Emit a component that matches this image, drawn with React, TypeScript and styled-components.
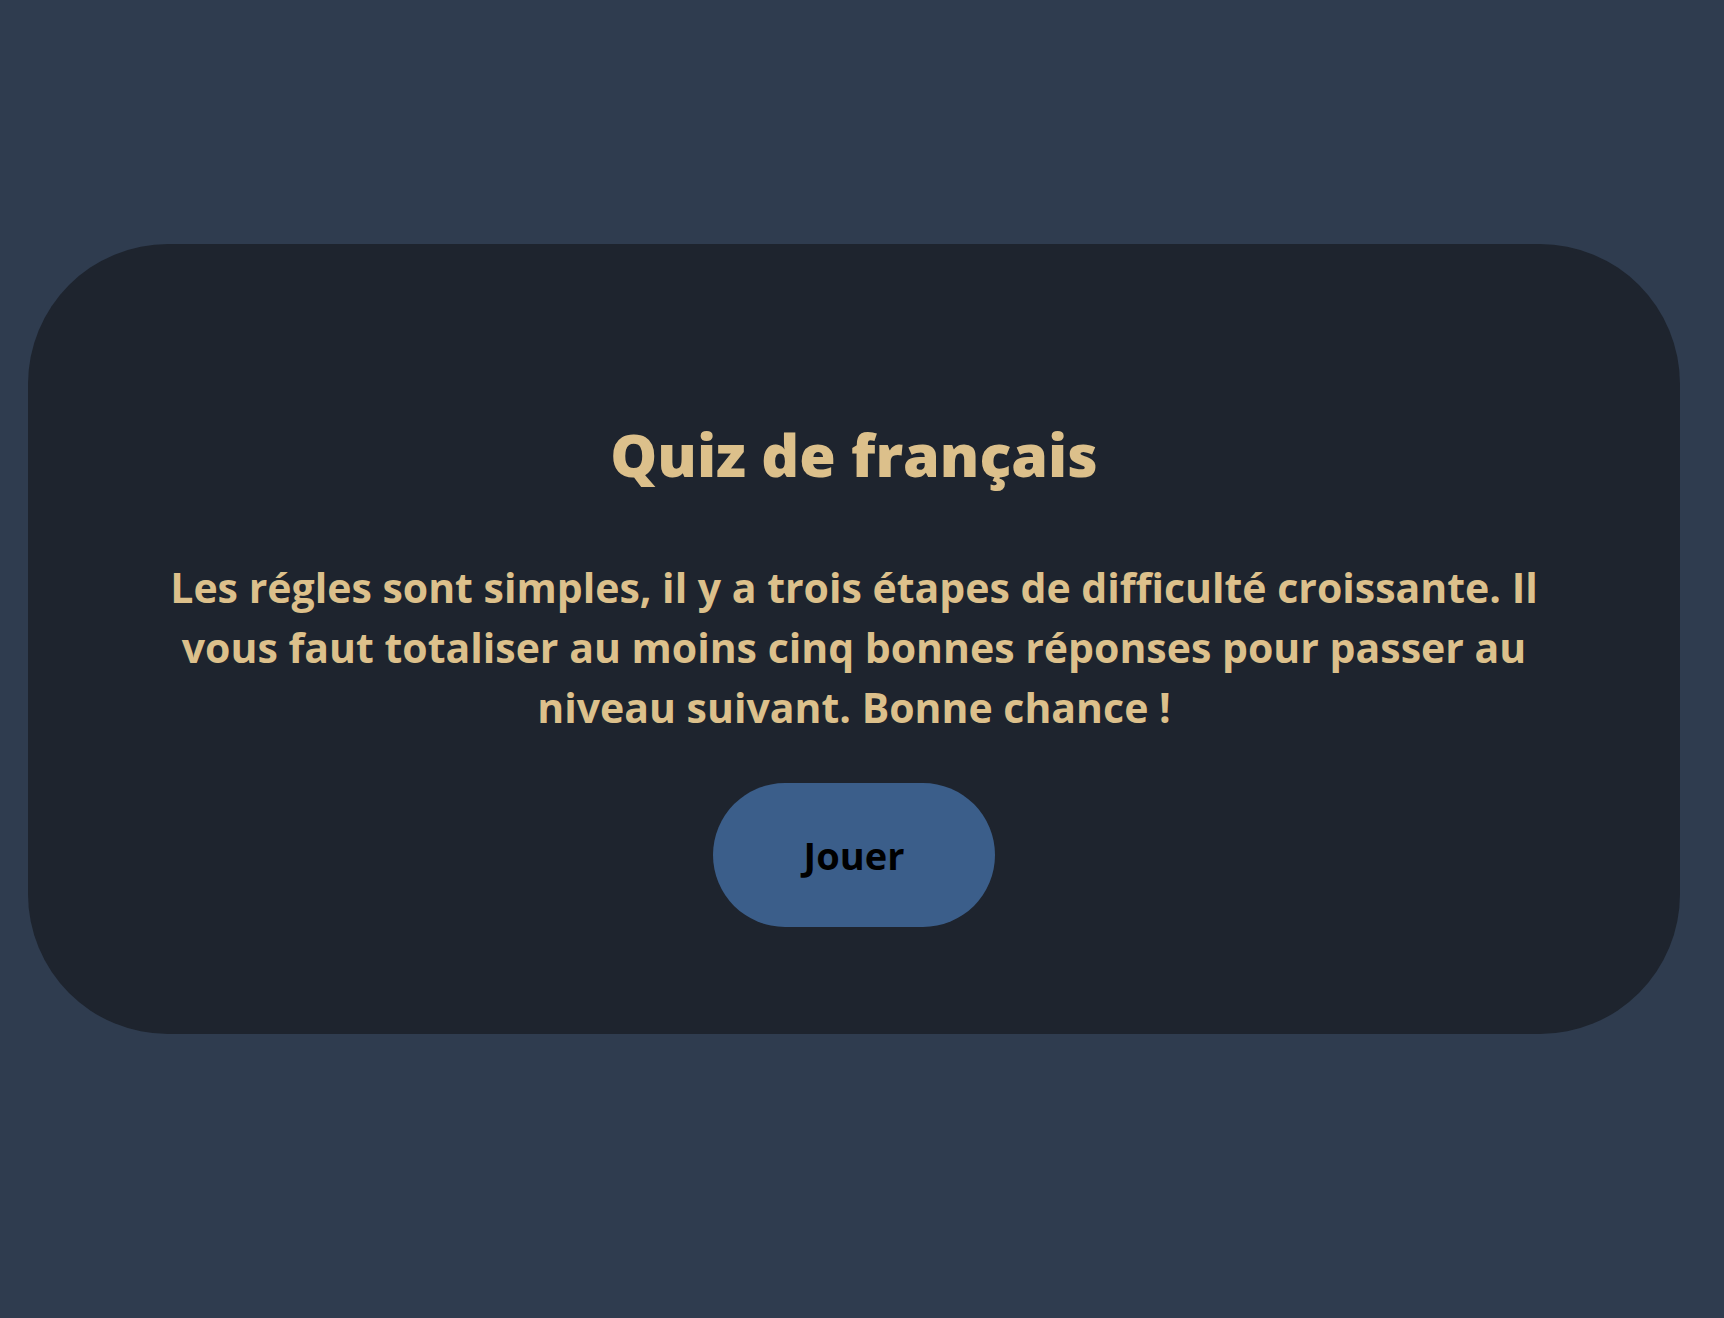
import React from 'react';
import styled, { createGlobalStyle } from 'styled-components';

const GlobalStyle = createGlobalStyle`
    html, body {
        margin: 0;
        padding: 0;
        background: #2f3c4f;
        min-height: 100%;
    }
    body {
        font-family: "Open Sans", Lato, sans-serif;
    }
`;

const Page = styled.main`
    min-height: 1318px;
    box-sizing: border-box;
    padding: 244px 44px 0 28px;
`;

const Card = styled.section`
    background: #1e242e;
    border-radius: 140px;
    height: 790px;
    box-sizing: border-box;
    padding: 175px 0 0;
    display: flex;
    flex-direction: column;
    align-items: center;
    text-align: center;
`;

const Title = styled.h1`
    margin: 0;
    color: #dcc08b;
    font-size: 59px;
    font-weight: 800;
    line-height: 1.2;
`;

const Rules = styled.p`
    margin: 67px 0 0;
    max-width: 1420px;
    color: #dcc08b;
    font-size: 41px;
    font-weight: 700;
    line-height: 60px;
`;

const PlayButton = styled.button`
    margin-top: 46px;
    width: 282px;
    height: 144px;
    border: none;
    border-radius: 72px;
    background: #3b5e8a;
    color: #000;
    font-family: "Open Sans", sans-serif;
    font-size: 38px;
    font-weight: 700;
    cursor: pointer;
`;

export default function App(): JSX.Element {
    return (
        <>
            <GlobalStyle />
            <Page>
                <Card>
                    <Title>Quiz de français</Title>
                    <Rules>
                        Les régles sont simples, il y a trois étapes de difficulté croissante. Il vous faut totaliser au moins cinq bonnes réponses pour passer au niveau suivant. Bonne chance !
                    </Rules>
                    <PlayButton>Jouer</PlayButton>
                </Card>
            </Page>
        </>
    );
}
